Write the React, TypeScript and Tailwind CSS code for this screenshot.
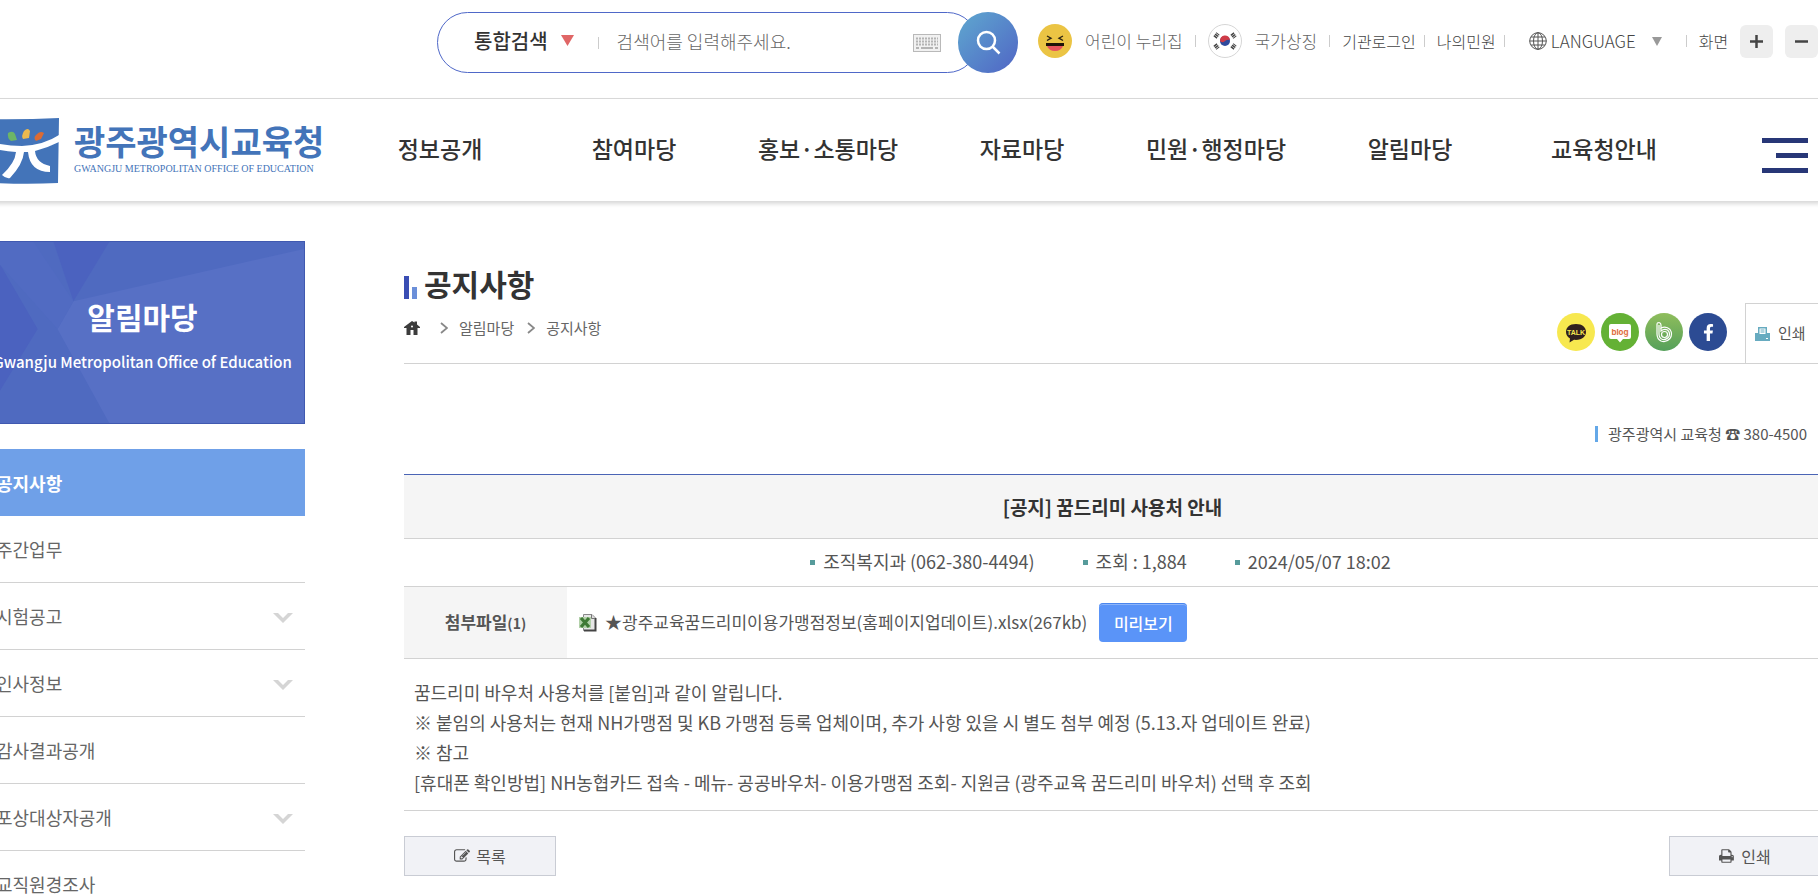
import { FaFacebookF } from "react-icons/fa";

const mainMenu = ["정보공개", "참여마당", "홍보·소통마당", "자료마당", "민원·행정마당", "알림마당", "교육청안내"];

const sideMenu = [
    { id: 1, name: "공지사항", active: true, sub: false },
    { id: 2, name: "주간업무", active: false, sub: false },
    { id: 3, name: "시험공고", active: false, sub: true },
    { id: 4, name: "인사정보", active: false, sub: true },
    { id: 5, name: "감사결과공개", active: false, sub: false },
    { id: 6, name: "포상대상자공개", active: false, sub: true },
    { id: 7, name: "교직원경조사", active: false, sub: false },
];

const postInfo = ["조직복지과 (062-380-4494)", "조회 : 1,884", "2024/05/07 18:02"];

const content = [
    "꿈드리미 바우처 사용처를 [붙임]과 같이 알립니다.",
    "※ 붙임의 사용처는 현재 NH가맹점 및 KB 가맹점 등록 업체이며, 추가 사항 있을 시 별도 첨부 예정 (5.13.자 업데이트 완료)",
    "※ 참고",
    "[휴대폰 확인방법] NH농협카드 접속 - 메뉴- 공공바우처- 이용가맹점 조회- 지원금 (광주교육 꿈드리미 바우처) 선택 후 조회",
];

function Divider() {
    return <span className="w-px h-3 bg-[#cccccc] shrink-0"></span>;
}

function LogoMark() {
    return (
        <svg width="79" height="66" viewBox="-20 0 79 66" className="shrink-0" aria-hidden="true">
            <path d="M-20 1Q20 2 59 0L58 65Q20 67 -20 64Z" fill="#4374b9" />
            <path d="M-20 20Q0 28 22 28Q44 27 59 17V24Q47 30 35 33Q36 45 50 48L50 54Q30 54 28 34H24Q23 46 10 60Q6 61 2 57Q15 45 16 34Q-2 33 -20 27Z" fill="#fff" />
            <path d="M8 15Q13 12 15 16L17 22L11 23Q7 20 8 15Z" fill="#6db566" />
            <path d="M24 13Q28 9 30 13L29 20L23 21Q21 18 24 13Z" fill="#ecb94e" />
            <path d="M36 17Q40 12 44 15L41 21L36 23Q33 20 36 17Z" fill="#dc6b34" />
        </svg>
    );
}

function KeyboardIcon() {
    return (
        <svg width="28" height="18" viewBox="0 0 28 18" aria-hidden="true">
            <rect x="0.5" y="0.5" width="27" height="17" fill="#f1f1f1" stroke="#b9b9b9" />
            <path d="M3 4.5H25M3 7.5H25M3 10.5H25" stroke="#b4b4b4" strokeWidth="2" strokeDasharray="2 1" />
            <path d="M3 14H6M8 14H20M22 14H25" stroke="#b4b4b4" strokeWidth="2" />
        </svg>
    );
}

function SmileIcon() {
    return (
        <svg width="34" height="34" viewBox="0 0 34 34" aria-hidden="true">
            <circle cx="17" cy="17" r="17" fill="#ebc444" />
            <path d="M9 12L13 14.2L9 16.5M25 12L21 14.2L25 16.5" fill="none" stroke="#2c2413" strokeWidth="1.4" />
            <path d="M8 19H26V22H8Z" fill="#1e1507" />
            <path d="M9 22H25Q23 27 17 27Q11 27 9 22Z" fill="#e6535c" />
        </svg>
    );
}

function FlagIcon() {
    return (
        <svg width="34" height="34" viewBox="0 0 34 34" aria-hidden="true">
            <circle cx="17" cy="17" r="16.5" fill="#fff" stroke="#d6d6d6" />
            <circle cx="17" cy="17" r="5" fill="#2f4a9c" />
            <path d="M12 17A5 5 0 0 1 22 16Q19.5 15 17 17Q14.5 19.5 12 17Z" fill="#cf3b47" />
            <g stroke="#444" strokeWidth="4" strokeDasharray="1.5 0.5">
                <path d="M7 13.5L10 9.5" />
                <path d="M24 9.5L27 13.5" />
                <path d="M7 20.5L10 24.5" />
                <path d="M24 24.5L27 20.5" />
            </g>
        </svg>
    );
}

function GlobeIcon() {
    return (
        <svg width="18" height="18" viewBox="0 0 18 18" fill="none" stroke="#555" strokeWidth="1" aria-hidden="true">
            <circle cx="9" cy="9" r="8.3" />
            <ellipse cx="9" cy="9" rx="4.5" ry="8.3" />
            <path d="M9 0.7V17.3M0.7 9H17.3M2 5H16M2 13H16" />
        </svg>
    );
}

function KakaoIcon() {
    return (
        <svg width="38" height="38" viewBox="0 0 38 38" aria-hidden="true">
            <circle cx="19" cy="19" r="19" fill="#f7e84f" />
            <path d="M19 11C12.5 11 9 14.5 9 19C9 22 10.5 24 13 25.5L12.5 29.5L17 26.8C25 27.5 29 23.5 29 19C29 14.5 25.5 11 19 11Z" fill="#30201f" />
            <text x="19" y="21.5" textAnchor="middle" fontSize="7" fontWeight="700" fontFamily="Liberation Sans, sans-serif" fill="#f7e84f">TALK</text>
        </svg>
    );
}

function BlogIcon() {
    return (
        <svg width="38" height="38" viewBox="0 0 38 38" aria-hidden="true">
            <circle cx="19" cy="19" r="19" fill="#64b135" />
            <path d="M10 11H28Q30 11 30 13V24Q30 26 28 26H22L19 29.5L16 26H10Q8 26 8 24V13Q8 11 10 11Z" fill="#fff" />
            <text x="19" y="21.5" textAnchor="middle" fontSize="8" fontWeight="700" fontFamily="Inter, sans-serif" fill="#df7043">blog</text>
        </svg>
    );
}

function BandIcon() {
    return (
        <svg width="38" height="38" viewBox="0 0 38 38" aria-hidden="true">
            <defs>
                <linearGradient id="band" x1="0" y1="0" x2="0" y2="1">
                    <stop offset="0" stopColor="#8fbd5c" />
                    <stop offset="1" stopColor="#55a05a" />
                </linearGradient>
            </defs>
            <circle cx="19" cy="19" r="19" fill="url(#band)" />
            <g fill="none" stroke="#fff" strokeWidth="1.2">
                <path d="M12 21V11Q12 9.5 14 9.5Q16 10 16 12V15Q21 12.5 25 16.5Q28 21 25 25.5Q21 30 16 28Q12 26 12 21Z" />
                <path d="M14 12V21Q14 25 17.5 26.5Q22 27 24 23.5Q25.5 19.5 22.5 17Q19 15.5 16 18V15" />
                <circle cx="19.5" cy="21.5" r="3" />
            </g>
        </svg>
    );
}

function ExcelIcon() {
    return (
        <svg width="18" height="19" viewBox="0 0 18 19" className="shrink-0" aria-hidden="true">
            <path d="M4.5 1.5H13L16.5 5V17.5H4.5Z" fill="#e6e6e6" stroke="#888" />
            <path d="M16.5 5V17.5H5" fill="none" stroke="#444" strokeWidth="2" />
            <path d="M12.5 1.5V5.5H16" fill="#ddd" stroke="#777" />
            <rect x="0" y="4" width="12" height="11" fill="#b3d1aa" />
            <path d="M2 5L10 14M10 5L2 14" stroke="#3f7a35" strokeWidth="3.2" />
        </svg>
    );
}

function EditIcon() {
    return (
        <svg width="16" height="16" viewBox="0 0 1792 1792" fill="currentColor" aria-hidden="true">
            <path transform="matrix(1 0 0 -1 0 1536)" d="M888 352l116 116l-152 152l-116 -116v-56h96v-96h56zM1328 1072q-16 16 -33 -1l-350 -350q-17 -17 -1 -33t33 1l350 350q17 17 1 33zM1408 478v-190q0 -119 -84.5 -203.5t-203.5 -84.5h-832q-119 0 -203.5 84.5t-84.5 203.5v832q0 119 84.5 203.5t203.5 84.5h832q63 0 117 -25q15 -7 18 -23q3 -17 -9 -29l-49 -49q-14 -14 -32 -8q-23 6 -45 6h-832q-66 0 -113 -47t-47 -113v-832q0 -66 47 -113t113 -47h832q66 0 113 47t47 113v126q0 13 9 22l64 64q15 15 35 7t20 -29zM1312 1216l288 -288l-672 -672h-288v288zM1756 1084l-92 -92l-288 288l92 92q28 28 68 28t68 -28l152 -152q28 -28 28 -68t-28 -68z" />
        </svg>
    );
}

function PrintIcon() {
    return (
        <svg width="16" height="16" viewBox="0 0 1792 1792" fill="currentColor" aria-hidden="true">
            <path transform="matrix(1 0 0 -1 0 1536)" d="M384 0h896v256h-896v-256zM384 640h896v384h-160q-40 0 -68 28t-28 68v160h-640v-640zM1536 576q0 26 -19 45t-45 19t-45 -19t-19 -45t19 -45t45 -19t45 19t19 45zM1664 576v-416q0 -13 -9.5 -22.5t-22.5 -9.5h-224v-160q0 -40 -28 -68t-68 -28h-960q-40 0 -68 28t-28 68v160h-224q-13 0 -22.5 9.5t-9.5 22.5v416q0 79 56.5 135.5t135.5 56.5h64v544q0 40 28 68t68 28h672q40 0 88 -20t76 -48l152 -152q28 -28 48 -76t20 -88v-256h64q79 0 135.5 -56.5t56.5 -135.5z" />
        </svg>
    );
}

export default function App() {
    return (
        <div className="min-h-screen overflow-hidden bg-white text-[#555555] font-['Noto_Sans_CJK_KR',sans-serif]">
            <div className="-ml-5 -mr-[3px]">
                <header>
                    {/* Search and utility links */}
                    <div className="flex items-start h-[99px] border-b border-[#dcdcdc] pl-[457px] pt-3 whitespace-nowrap">
                        <form className="flex items-center shrink-0">
                            <div className="flex items-center w-[541px] h-[61px] pl-9 pr-9 border border-[#4f68c8] rounded-full">
                                <button type="button" className="flex items-center gap-[13px] pb-1 text-xl font-medium text-[#333333]">
                                    통합검색
                                    <svg width="13" height="11" viewBox="0 0 13 11" aria-hidden="true">
                                        <path d="M0 0H13L6.5 11Z" fill="#e06666" />
                                    </svg>
                                </button>
                                <span className="w-px h-3 bg-[#cccccc] ml-6"></span>
                                <input
                                    type="text"
                                    aria-label="검색어"
                                    placeholder="검색어를 입력해주세요."
                                    className="flex-1 min-w-0 ml-[18px] pb-1 text-lg font-light outline-none placeholder:text-[#666666]"
                                />
                                <KeyboardIcon />
                            </div>
                            <button
                                type="button"
                                aria-label="검색"
                                className="-ml-5 w-[60px] h-[61px] rounded-full bg-linear-to-br from-[#5fa8cf] to-[#5064c4] grid place-items-center"
                            >
                                <svg width="25" height="25" viewBox="0 0 25 25" fill="none" stroke="#fff" strokeWidth="2.5" aria-hidden="true">
                                    <circle cx="10.5" cy="10.5" r="8.5" />
                                    <path d="M16.5 16.5L23.5 23.5" />
                                </svg>
                            </button>
                        </form>
                        <div className="flex items-center h-[60px] -mt-px ml-5 text-base font-light text-[#444444]">
                            <a href="#" className="flex items-center gap-[13px] text-[17px] text-[#666666]">
                                <SmileIcon />
                                어린이 누리집
                            </a>
                            <span className="w-3"></span>
                            <Divider />
                            <a href="#" className="flex items-center gap-[13px] mx-3 text-[17px] text-[#666666]">
                                <FlagIcon />
                                국가상징
                            </a>
                            <Divider />
                            <a href="#" className="ml-3 mr-2">기관로그인</a>
                            <Divider />
                            <a href="#" className="ml-3 mr-2">나의민원</a>
                            <Divider />
                            <button type="button" className="flex items-center mx-6 text-[17px]">
                                <GlobeIcon />
                                <span className="ml-1 mr-4">LANGUAGE</span>
                                <svg width="10" height="9" viewBox="0 0 10 9" aria-hidden="true">
                                    <path d="M0 0H10L5 9Z" fill="#999" />
                                </svg>
                            </button>
                            <Divider />
                            <span className="mx-3">화면</span>
                            <button type="button" aria-label="확대" className="w-[33px] h-[33px] mr-3 rounded-md bg-[#eeeeee] grid place-items-center">
                                <svg width="13" height="13" viewBox="0 0 13 13" stroke="#444" strokeWidth="2.5" aria-hidden="true">
                                    <path d="M0 6.5H13M6.5 0V13" />
                                </svg>
                            </button>
                            <button type="button" aria-label="축소" className="w-[33px] h-[33px] rounded-md bg-[#eeeeee] grid place-items-center">
                                <svg width="13" height="13" viewBox="0 0 13 13" stroke="#444" strokeWidth="2.5" aria-hidden="true">
                                    <path d="M0 6.5H13" />
                                </svg>
                            </button>
                        </div>
                    </div>

                    {/* Logo and main menu */}
                    <div className="flex items-center h-[103px] border-b border-[#dddddd] shadow-[0_2px_4px_rgba(0,0,0,0.15)]">
                        <a href="#" className="flex items-center gap-[15px] w-[363px] shrink-0 pt-0.5 text-[#4374b9] whitespace-nowrap">
                            <LogoMark />
                            <span>
                                <span className="block text-[34px] leading-9 font-bold">광주광역시교육청</span>
                                <span className="block text-[10px] leading-5 font-['Liberation_Serif',serif]">GWANGJU METROPOLITAN OFFICE OF EDUCATION</span>
                            </span>
                        </a>
                        <nav className="flex-1 grid grid-cols-7 pb-1 text-center text-[23px] font-medium text-[#333333] whitespace-nowrap">
                            {mainMenu.map((menu) => (
                                <a key={menu} href="#">{menu}</a>
                            ))}
                        </nav>
                        <div className="w-[120px] pr-[13px] pt-2.5 flex justify-end">
                            <button type="button" aria-label="전체메뉴" className="flex flex-col items-end gap-2.5">
                                <span className="w-[46px] h-[5px] bg-[#283777]"></span>
                                <span className="w-8 h-[5px] bg-[#283777]"></span>
                                <span className="w-[46px] h-[5px] bg-[#283777]"></span>
                            </button>
                        </div>
                    </div>
                </header>

                <div className="flex">
                    {/* Side menu */}
                    <aside className="w-[325px] shrink-0 pt-[39px]">
                        <div className="relative h-[183px] border border-[#4059b0] bg-[#5770c5] text-white text-center">
                            <svg viewBox="0 0 325 183" preserveAspectRatio="none" className="absolute inset-0 w-full h-full" aria-hidden="true">
                                <path d="M0 0H325V7L93 60L77 88L129 183H0Z" fill="#4f6ac0" />
                                <path d="M53 0H109L73 60Z" transform="translate(20 0)" fill="#4b62bf" />
                                <path d="M0 0L20 24L57 88L20 149L0 183Z" fill="#4b62bf" />
                                <path d="M0 0H53L93 60L77 88L20 24Z" fill="#516bc2" />
                            </svg>
                            <h2 className="relative pt-[54px] text-[30px] leading-10 font-bold">알림마당</h2>
                            <p className="relative mt-3 text-[15px] leading-7 font-medium whitespace-nowrap">Gwangju Metropolitan Office of Education</p>
                        </div>
                        <ul className="mt-[25px]">
                            {sideMenu.map((menu) => (
                                <li key={menu.id}>
                                    <a
                                        href="#"
                                        className={
                                            menu.active
                                                ? "flex items-center h-[67px] px-4 text-lg font-bold bg-[#6fa0e8] text-white"
                                                : "flex items-center justify-between h-[67px] pl-4 pr-3 text-lg text-[#666666] border-b border-[#d2d2d2]"
                                        }
                                    >
                                        {menu.name}
                                        {menu.sub && (
                                            <svg width="20" height="10" viewBox="0 0 20 10" className="mt-1" aria-hidden="true">
                                                <path d="M0 0H5L10 5L15 0H20L10 10Z" fill="#d5d5d5" />
                                            </svg>
                                        )}
                                    </a>
                                </li>
                            ))}
                        </ul>
                    </aside>

                    <main className="flex-1 min-w-0 ml-[99px] pt-[60px]">
                        {/* Page title */}
                        <div className="flex justify-between items-end border-b border-[#d2d2d2]">
                            <div className="pb-[11px]">
                                <div className="flex items-center gap-[7px]">
                                    <svg width="13" height="23" viewBox="0 0 13 23" className="mt-2" aria-hidden="true">
                                        <path d="M0 0H5V23H0Z" fill="#3a4eb4" />
                                        <path d="M8 11H13V23H8Z" fill="#6b8fd9" />
                                    </svg>
                                    <h1 className="text-[30px] leading-[42px] font-bold text-[#333333]">공지사항</h1>
                                </div>
                                <nav className="flex items-center h-12 text-[15px] text-[#666666]">
                                    <a href="#" aria-label="홈">
                                        <svg width="16" height="14" viewBox="0 0 16 14" aria-hidden="true">
                                            <path d="M8 0L10.5 1.5V0.5H13V3.5L16 6V7H13.5V14H9.5V9H6.5V14H2.5V7H0V6Z" fill="#3c3c3c" />
                                            <circle cx="8" cy="5.5" r="1" fill="#fff" />
                                        </svg>
                                    </a>
                                    <svg width="8" height="12" viewBox="0 0 8 12" fill="none" stroke="#888" strokeWidth="1.8" className="ml-5 mr-[11px]" aria-hidden="true">
                                        <path d="M1 1L7 6L1 11" />
                                    </svg>
                                    <a href="#">알림마당</a>
                                    <svg width="8" height="12" viewBox="0 0 8 12" fill="none" stroke="#888" strokeWidth="1.8" className="ml-[13px] mr-[11px]" aria-hidden="true">
                                        <path d="M1 1L7 6L1 11" />
                                    </svg>
                                    <a href="#">공지사항</a>
                                </nav>
                            </div>
                            <div className="flex items-end">
                                <div className="flex gap-1.5 mr-[18px] pb-3">
                                    <a href="#" aria-label="카카오톡"><KakaoIcon /></a>
                                    <a href="#" aria-label="블로그"><BlogIcon /></a>
                                    <a href="#" aria-label="밴드"><BandIcon /></a>
                                    <a href="#" aria-label="페이스북" className="grid place-items-center w-[38px] h-[38px] rounded-full bg-[#2c4b93] text-white">
                                        <FaFacebookF size={17} />
                                    </a>
                                </div>
                                <button type="button" className="flex items-center gap-2 w-[76px] h-[60px] pl-[9px] border-l border-t border-[#d2d2d2] text-[15px] whitespace-nowrap">
                                    <svg width="15" height="14" viewBox="0 0 15 14" aria-hidden="true">
                                        <path d="M0 6H3V0H12V6H15V14H0Z" fill="#67abc0" />
                                        <path d="M4.5 1.5H10.5V7H4.5Z" fill="#fff" />
                                        <path d="M5.5 3H9.5M5.5 5H9.5" stroke="#67abc0" />
                                        <path d="M11 11H13V12H11Z" fill="#fff" />
                                    </svg>
                                    인쇄
                                </button>
                            </div>
                        </div>

                        <div className="flex justify-end items-center gap-2.5 h-6 mt-[58px] mb-7 pr-3.5 text-[15px]">
                            <span className="w-[3px] h-4 bg-[#64a8e8]"></span>
                            <p>광주광역시 교육청 ☎ 380-4500</p>
                        </div>

                        {/* Post */}
                        <table className="w-full border-collapse border-t border-[#4a64b5] text-lg">
                            <tbody>
                                <tr className="border-b border-[#d2d2d2]">
                                    <th colSpan={2} className="h-16 bg-[#f5f5f5] text-[19px] font-bold text-[#333333]">[공지] 꿈드리미 사용처 안내</th>
                                </tr>
                                <tr className="border-b border-[#d2d2d2]">
                                    <td colSpan={2} className="h-12 pb-1">
                                        <ul className="flex justify-center gap-12 pr-6">
                                            {postInfo.map((info) => (
                                                <li key={info} className="flex items-center gap-2">
                                                    <span className="w-[5px] h-[5px] mt-1 bg-[#569b9b]"></span>
                                                    {info}
                                                </li>
                                            ))}
                                        </ul>
                                    </td>
                                </tr>
                                <tr className="border-b border-[#d2d2d2] text-[17px]">
                                    <th className="w-[163px] h-[72px] bg-[#f5f5f5] font-bold">첨부파일<span className="text-sm">(1)</span></th>
                                    <td className="pl-3">
                                        <div className="flex items-center gap-3">
                                            <a href="#" className="flex items-center gap-2">
                                                <ExcelIcon />
                                                ★광주교육꿈드리미이용가맹점정보(홈페이지업데이트).xlsx(267kb)
                                            </a>
                                            <button type="button" className="w-[88px] h-[39px] rounded-sm bg-[#5a94f8] border-t border-[#4a86ee] shadow-[inset_0_1px_0_#8cb4fa] text-base font-medium text-white">
                                                미리보기
                                            </button>
                                        </div>
                                    </td>
                                </tr>
                                <tr className="border-b border-[#d2d2d2]">
                                    <td colSpan={2} className="pl-2.5 pt-[18px] pb-[13px] leading-[30px]">
                                        {content.map((line) => (
                                            <p key={line}>{line}</p>
                                        ))}
                                    </td>
                                </tr>
                            </tbody>
                        </table>

                        <div className="flex justify-between mt-[25px] mb-10">
                            <button type="button" className="flex items-center justify-center gap-1.5 w-[152px] h-10 border border-[#c9ccd4] bg-[#f1f2f6] text-base">
                                <EditIcon />
                                목록
                            </button>
                            <button type="button" className="flex items-center justify-center gap-1.5 w-[152px] h-10 border border-[#c9ccd4] bg-[#f1f2f6] text-base">
                                <PrintIcon />
                                인쇄
                            </button>
                        </div>
                    </main>
                </div>
            </div>
        </div>
    );
}
